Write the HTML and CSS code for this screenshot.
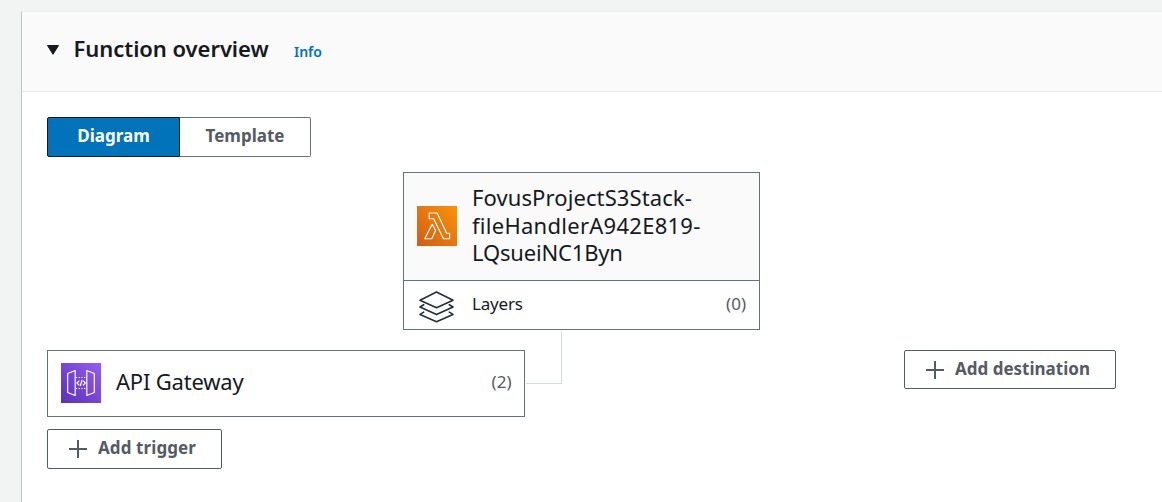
FILE: index.html
```html
<!DOCTYPE html>
<html lang="en">
<head>
<meta charset="utf-8">
<title>Function overview</title>
<link rel="stylesheet" href="styles.css">
</head>
<body>
<main class="panel">
  <header class="panel-header">
    <svg class="caret" width="14" height="12" viewBox="0 0 14 12"><path d="M1.5 1.5h11L7 10.3z" fill="#16191f" stroke="#16191f" stroke-linejoin="round"/></svg>
    <h2 class="title">Function overview</h2>
    <a class="info">Info</a>
  </header>
  <section class="panel-body">
    <div class="tabs">
      <button class="tab tab-active"><span class="t-diagram">Diagram</span></button>
      <button class="tab tab-plain"><span class="t-template">Template</span></button>
    </div>
    <div class="function-card">
      <div class="function-head">
        <svg class="service-icon" width="40" height="40" viewBox="0 0 40 40">
          <defs><linearGradient id="lambda" x1="0" y1="1" x2="1" y2="0"><stop offset="0" stop-color="#d05c17"/><stop offset="1" stop-color="#fa9407"/></linearGradient></defs>
          <path fill="url(#lambda)" d="M0 0h40v40H0z"/>
          <path d="M15.200 18.300L7.700 32.700h7.100l3.800-8.200zM12.200 7v5.700h4.400l9.900 20h6.100v-5.500h-3L20.100 7z" fill="none" stroke="#fff" stroke-width="1.150" stroke-linejoin="round"/>
        </svg>
        <div class="function-name"><span class="n1">FovusProjectS3Stack-</span><br><span class="n2">fileHandlerA942E819-</span><br><span class="n3">LQsueiNC1Byn</span></div>
      </div>
      <div class="layers">
        <svg class="layers-icon" width="40" height="36" viewBox="0 0 40 36" fill="none" stroke="#232f3e" stroke-width="1.600" stroke-linejoin="round" stroke-linecap="round">
          <path d="M19.500 3L36 11.200l-16.500 7.600L3 11.200z"/>
          <path d="M6.700 15.700L3 18l16.500 7.600L36 18l-3.700-2.300"/>
          <path d="M6.700 23.100L3 25.400l16.500 7.300L36 25.400l-3.700-2.300"/>
        </svg>
        <span class="layers-label">Layers</span>
        <span class="count">(0)</span>
      </div>
    </div>
    <div class="connections">
      <div class="triggers">
        <div class="trigger-card">
          <svg class="service-icon" width="40" height="40" viewBox="0 0 40 40">
            <defs><linearGradient id="gateway" x1="0" y1="1" x2="1" y2="0"><stop offset="0" stop-color="#5a30b5"/><stop offset="1" stop-color="#945df2"/></linearGradient></defs>
            <path fill="url(#gateway)" d="M0 0h40v40H0z"/>
            <g fill="none" stroke="#fff" stroke-width="1.150" stroke-linejoin="round">
              <path d="M6.700 10.500l7.500-3v25l-7.500-3zM33.300 10.500l-7.500-3v25l7.500-3z"/>
              <path d="M15 14.500h10.500M15 25.500h10.500" stroke-dasharray="1.200 1.500"/>
              <path d="M18.300 17.600L16 20l2.300 2.400M22 17.600l2.300 2.400-2.300 2.400M21 17l-1.700 6"/>
            </g>
          </svg>
          <span class="trigger-name">API Gateway</span>
          <span class="count">(2)</span>
          <i class="connector"></i>
        </div>
        <button class="add-button add-trigger"><svg class="plus" width="18" height="18" viewBox="0 0 18 18"><path d="M9 0v18M0 9h18" stroke="#545b64" stroke-width="2"/></svg><span class="t-trigger">Add trigger</span></button>
      </div>
      <button class="add-button add-destination"><svg class="plus" width="18" height="18" viewBox="0 0 18 18"><path d="M9 0v18M0 9h18" stroke="#545b64" stroke-width="2"/></svg><span class="t-destination">Add destination</span></button>
    </div>
  </section>
</main>
</body>
</html>
```
FILE: styles.css
```css
* { box-sizing: border-box; }
body {
  margin: 0;
  height: 502px;
  overflow: hidden;
  padding: 11px 0 0 21px;
  background: #f2f3f3;
  color: #16191f;
  font-family: "Noto Sans", "Open Sans", sans-serif;
}
.panel { height: 491px; background: #fff; border-left: 1px solid #c3c6c6; border-top: 1px solid #eaeded; }
.panel-header { display: flex; height: 80px; padding-left: 24px; background: #fafafa; border-bottom: 1px solid #eaeded; }
.caret { margin-top: 32px; }
.title { margin: 20px 0 0 13.500px; width: 206.500px; font-size: 22px; line-height: 32px; font-weight: 600; white-space: nowrap; letter-spacing: -.05px; }
.info { margin: 30px 0 0 14px; font-size: 14px; line-height: 20px; font-weight: 600; color: #0073bb; }
.panel-body { padding: 25px 46px 0 25px; }
.tabs { display: flex; }
button { display: flex; align-items: center; padding: 0; font: 700 17px/24px "Noto Sans", "Open Sans", sans-serif; background: #fff; border: 1px solid #687078; border-radius: 2px; color: #545b64; white-space: nowrap; }
.tab { justify-content: center; height: 40px; padding-bottom: 2px; }
.tab-active { width: 133px; background: #0073bb; border-color: #16191f; color: #fff; border-radius: 2px 0 0 2px; }
.tab-plain { width: 131px; border-left: 0; border-radius: 0 2px 2px 0; }
.function-card { width: 357px; height: 158px; margin: 15px auto 0; border: 1px solid #687078; }
.function-head { display: flex; align-items: center; height: 108px; padding: 0 0 2px 13px; background: #fafafa; border-bottom: 1px solid #687078; }
.service-icon { flex: none; }
.function-name { margin-left: 15px; font-size: 22px; line-height: 27.500px; white-space: nowrap; }
.n1 { letter-spacing: .1px; }
.n2 { letter-spacing: .27px; }
.n3 { letter-spacing: -.17px; }
.layers { display: flex; height: 48px; padding: 0 13px; }
.layers-icon { margin-top: 8px; }
.layers-label { margin: 11px 0 0 15px; font-size: 17px; line-height: 24px; letter-spacing: -.2px; }
.count { margin: 11px 0 0 auto; font-size: 17px; line-height: 24px; color: #545b64; }
.connections { display: flex; justify-content: space-between; align-items: flex-start; margin-top: 20px; }
.trigger-card { position: relative; display: flex; align-items: center; width: 478px; height: 67px; padding: 0 12.500px 1px 13px; border: 1px solid #687078; }
.trigger-card .count { margin-top: -2px; }
.trigger-name { margin: -4px 0 0 15px; font-size: 22px; line-height: 30px; letter-spacing: -.2px; }
.connector { position: absolute; left: 478px; top: -20px; width: 36px; height: 53px; border-right: 1px solid #d5dbdb; border-bottom: 1px solid #d5dbdb; }
.add-button { border-color: #545b64; height: 40px; padding-left: 21px; gap: 11px; }
.add-button span { margin-top: -2px; }
.t-trigger { letter-spacing: .1px; }
.add-trigger { width: 175px; margin-top: 12px; }
.add-destination { width: 212px; height: 39px; }
```
